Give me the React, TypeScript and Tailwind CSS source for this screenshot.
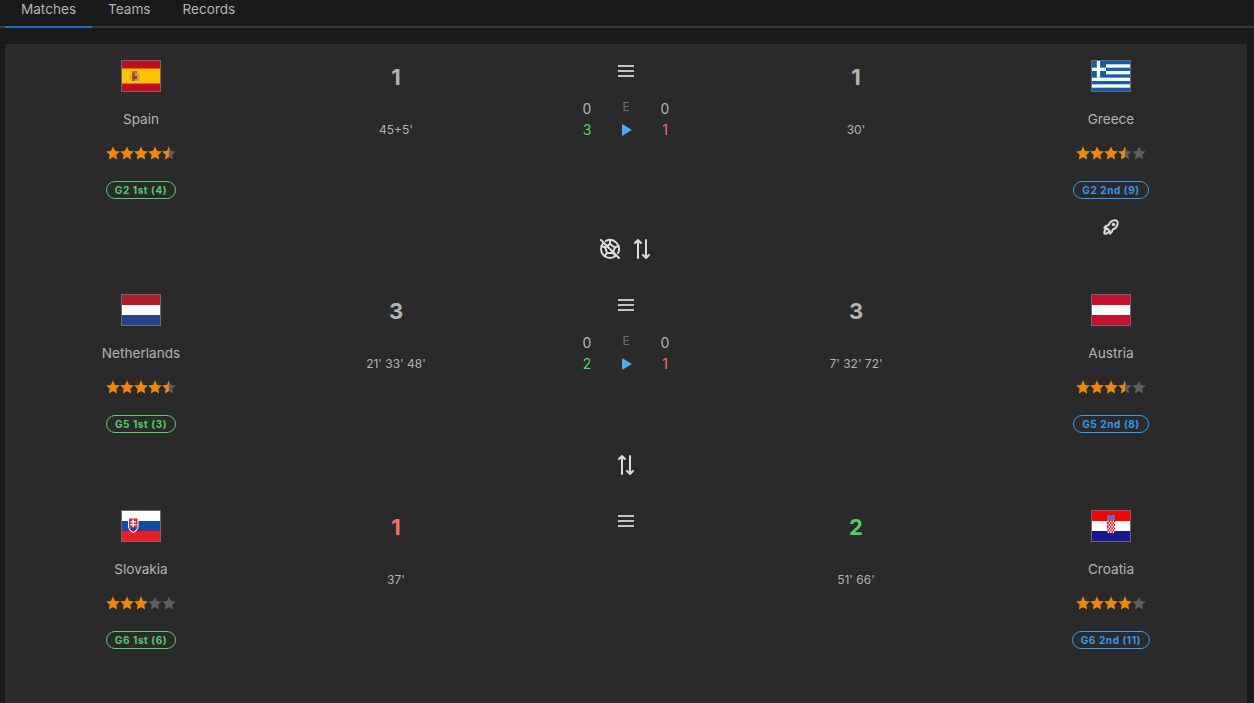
import React from "react";
import { TbBallFootballOff, TbRocket } from "react-icons/tb";

type Team = {
  name: string;
  flag: React.ReactNode;
  stars: number;
  badge: string;
  rocket?: boolean;
};

type Match = {
  home: Team;
  away: Team;
  homeScore: number;
  awayScore: number;
  homeGoals: string;
  awayGoals: string;
  scoreTone?: boolean;
  penalties?: [number, number];
  swap: "both" | "one" | "none";
};

const Stripes = ({ colors }: { colors: string[] }) => (
  <svg viewBox="0 0 38 30" className="block w-full h-full" preserveAspectRatio="none">
    {colors.map((c, i) => (
      <rect key={i} x="0" y={(i * 30) / colors.length} width="38" height={30 / colors.length + 0.2} fill={c} />
    ))}
  </svg>
);

const Spain = () => (
  <svg viewBox="0 0 38 30" className="block w-full h-full">
    <rect width="38" height="30" fill="#c60b1e" />
    <rect y="7.500" width="38" height="15" fill="#ffc400" />
    <rect x="9.500" y="10" width="6" height="2" fill="#b5762a" />
    <rect x="10" y="12" width="3" height="8" fill="#b5521f" />
    <rect x="13" y="12" width="3" height="8" fill="#cf8f6f" />
    <rect x="11" y="15" width="4" height="3" fill="#a8361f" />
    <rect x="8" y="13" width="1.500" height="7" fill="#c9a04a" />
    <rect x="16" y="13" width="1.500" height="7" fill="#c9a04a" />
  </svg>
);

const Greece = () => (
  <svg viewBox="0 0 38 30" className="block w-full h-full">
    <rect width="38" height="30" fill="#0d5eaf" />
    {[3.33, 10, 16.67, 23.33].map((y) => (
      <rect key={y} x={y < 16 ? 14 : 0} y={y} width="38" height="3.33" fill="#fff" />
    ))}
    <rect x="4.800" width="3.300" height="16.670" fill="#fff" />
    <rect y="6.670" width="14" height="3.330" fill="#fff" />
  </svg>
);

const Slovakia = () => (
  <svg viewBox="0 0 38 30" className="block w-full h-full">
    <rect width="38" height="10" fill="#fff" />
    <rect y="10" width="38" height="10" fill="#0b4ea2" />
    <rect y="20" width="38" height="10" fill="#ee1c25" />
    <path d="M6 6.500h10.500v8.500c0 3.500-2.500 5.500-5.250 7C8.500 20.500 6 18.500 6 15z" fill="#fff" />
    <path d="M7 7.500h8.500v7.500c0 2.800-2 4.500-4.250 5.800C9 19.500 7 17.800 7 15z" fill="#ee1c25" />
    <path d="M10.500 8.500h1.500v1.800h2v1.200h-2v1.500h2.500v1.300H12v3.200h-1.500v-3.200H8v-1.300h2.500v-1.500h-2v-1.200h2z" fill="#fff" />
    <path d="M7.800 17c1.500-1 5.400-1 6.900 0-.8 1.800-2 2.800-3.450 3.600C9.800 19.800 8.600 18.800 7.800 17z" fill="#0b4ea2" />
  </svg>
);

const Croatia = () => (
  <svg viewBox="0 0 38 30" className="block w-full h-full">
    <rect width="38" height="10" fill="#f00" />
    <rect y="10" width="38" height="10" fill="#fff" />
    <rect y="20" width="38" height="10" fill="#171796" />
    <path d="M15 4.500l2 -.8 2 .8 2 -.8 2 .8V9h-8z" fill="#5a76b0" />
    <path d="M15 9h8v9c0 2-2 3.500-4 4.500-2-1-4-2.500-4-4.500z" fill="#f00" />
    {[0, 1, 2, 3, 4, 5, 6].map((r) =>
      [0, 1, 2].map((c) => (
        <rect key={`${r}-${c}`} x={15.500 + c * 2.600 + (r % 2) * 1.300} y={9.500 + r * 1.800} width="1.300" height="1.800" fill="#fff" />
      ))
    )}
  </svg>
);

const Flag = ({ children }: { children: React.ReactNode }) => (
  <div className="w-10 h-8 border border-[#6b6b6b] overflow-hidden">{children}</div>
);

const STAR = "M7 .6l2 4.300 4.700.6-3.500 3.200.9 4.700L7 11.100l-4.100 2.300.9-4.700L.3 5.500 5 4.900z";

const Star = ({ fill, id }: { fill: number; id: string }) => (
  <svg width="14" height="14" viewBox="0 0 14 14" className="block">
    <path d={STAR} fill="#5e5e5e" />
    {fill > 0 && (
      <>
        <clipPath id={id}>
          <rect width={14 * fill} height="14" />
        </clipPath>
        <path d={STAR} fill="#f38800" clipPath={`url(#${id})`} />
      </>
    )}
  </svg>
);

const Stars = ({ value, name }: { value: number; name: string }) => (
  <div className="flex">
    {[0, 1, 2, 3, 4].map((i) => (
      <Star key={i} id={`${name}-${i}`} fill={Math.max(0, Math.min(1, value - i))} />
    ))}
  </div>
);

const TeamCol = ({ team }: { team: Team }) => {
  const first = team.badge.includes("1st");
  return (
    <div className="flex flex-col items-center pt-4">
      <Flag>{team.flag}</Flag>
      <div className="mt-[17px] text-[13.6px] leading-5 text-[#b3b3b3]">{team.name}</div>
      <div className="mt-[17px]">
        <Stars value={team.stars} name={team.name} />
      </div>
      <div
        className={`mt-[21px] h-[18px] px-2 rounded-full border flex items-center text-[10px] font-bold tracking-[0.6px] ${
          first ? "border-[#51cf66] text-[#51cf66]" : "border-[#339af0] text-[#339af0]"
        }`}
      >
        {team.badge}
      </div>
      {team.rocket ? (
        <div className="mt-[18px] h-5 flex items-center justify-center text-[#d9d9d9]">
          <TbRocket size={20} strokeWidth={2.4} />
        </div>
      ) : (
        <div className="h-5" />
      )}
    </div>
  );
};

const ScoreCol = ({ score, goals, tone }: { score: number; goals: string; tone?: string }) => (
  <div className="flex flex-col items-center pt-[18px]">
    <div className={`text-[22px] leading-[30px] font-bold ${tone ?? "text-[#b3b3b3]"}`}>{score}</div>
    <div className="mt-[30px] text-xs leading-[16px] text-[#b3b3b3]">{goals}</div>
  </div>
);

const MenuLines = () => (
  <svg width="24" height="24" viewBox="0 0 24 24" fill="none" stroke="#c4c4c4" strokeWidth="2" className="block">
    <path d="M4 7h16M4 12h16M4 17h16" />
  </svg>
);

const SwapArrows = () => (
  <svg width="24" height="24" viewBox="0 0 24 24" fill="none" stroke="currentColor" strokeWidth="2" strokeLinecap="round" strokeLinejoin="round" className="block">
    <path d="M8 3v18M5 6l3-3 3 3M16 21V3M13 18l3 3 3-3" />
  </svg>
);

const CenterCol = ({ penalties }: { penalties?: [number, number] }) => (
  <div className="flex flex-col items-center pt-[15px]">
    <MenuLines />
    {penalties && (
      <div className="mt-4 grid grid-cols-[39px_39px_39px] justify-center text-center text-sm">
        <div className="leading-5 text-[#b3b3b3]">0</div>
        <div className="text-xs leading-[16px] text-[#6f6f6f]">E</div>
        <div className="leading-5 text-[#b3b3b3]">0</div>
        <div className={`mt-[1px] leading-5 ${penalties[0] > penalties[1] ? "text-[#51cf66]" : "text-[#ff6b6b]"}`}>
          {penalties[0]}
        </div>
        <div className="mt-[1px] pl-[2px] flex items-center justify-center">
          <svg width="10" height="12" viewBox="0 0 10 12" className="block">
            <path d="M0 0L10 6 0 12z" fill="#4dabf7" />
          </svg>
        </div>
        <div className={`mt-[1px] leading-5 ${penalties[1] > penalties[0] ? "text-[#51cf66]" : "text-[#ff6b6b]"}`}>
          {penalties[1]}
        </div>
      </div>
    )}
  </div>
);

const matches: Match[] = [
  {
    home: { name: "Spain", flag: <Spain />, stars: 4.5, badge: "G2 1st (4)" },
    away: { name: "Greece", flag: <Greece />, stars: 3.5, badge: "G2 2nd (9)", rocket: true },
    homeScore: 1,
    awayScore: 1,
    homeGoals: "45+5'",
    awayGoals: "30'",
    penalties: [3, 1],
    swap: "both",
  },
  {
    home: { name: "Netherlands", flag: <Stripes colors={["#ae1c28", "#fff", "#21468b"]} />, stars: 4.5, badge: "G5 1st (3)" },
    away: { name: "Austria", flag: <Stripes colors={["#c8102e", "#fff", "#c8102e"]} />, stars: 3.5, badge: "G5 2nd (8)" },
    homeScore: 3,
    awayScore: 3,
    homeGoals: "21' 33' 48'",
    awayGoals: "7' 32' 72'",
    penalties: [2, 1],
    swap: "one",
  },
  {
    home: { name: "Slovakia", flag: <Slovakia />, stars: 3, badge: "G6 1st (6)" },
    away: { name: "Croatia", flag: <Croatia />, stars: 4, badge: "G6 2nd (11)" },
    homeScore: 1,
    awayScore: 2,
    homeGoals: "37'",
    awayGoals: "51' 66'",
    scoreTone: true,
    swap: "none",
  },
];

export default function App() {
  return (
    <div className="h-[703px] overflow-hidden bg-[#1a1a1a] font-['Inter',sans-serif]">
      <div className="flex h-[28px] border-b-2 border-[#3a3a3a]">
        <div className="h-[28px] ml-[5px] w-[87px] text-center text-[13.6px] leading-[18px] text-[#b3b3b3] border-b-2 border-[#1c6ec7]">Matches</div>
        <div className="px-4 text-[13.6px] leading-[18px] text-[#b3b3b3]">Teams</div>
        <div className="px-4 text-[13.6px] leading-[18px] text-[#b3b3b3]">Records</div>
      </div>
      <div className="ml-[5px] mr-[7px] mt-4 h-[659px] bg-[#2a2a2a]">
        {matches.map((m) => (
          <div key={m.home.name}>
            <div className="grid grid-cols-[272px_238px_222px_238px_272px]">
              <TeamCol team={m.home} />
              <ScoreCol
                score={m.homeScore}
                goals={m.homeGoals}
                tone={m.scoreTone ? "text-[#ff6b6b]" : undefined}
              />
              <CenterCol penalties={m.penalties} />
              <ScoreCol
                score={m.awayScore}
                goals={m.awayGoals}
                tone={m.scoreTone ? "text-[#51cf66]" : undefined}
              />
              <TeamCol team={m.away} />
            </div>
            {m.swap !== "none" && (
              <div className="flex h-6 mb-[17px] items-center justify-center gap-2 text-[#dcdcdc]">
                {m.swap === "both" && <TbBallFootballOff size={24} />}
                <SwapArrows />
              </div>
            )}
          </div>
        ))}
      </div>
    </div>
  );
}
